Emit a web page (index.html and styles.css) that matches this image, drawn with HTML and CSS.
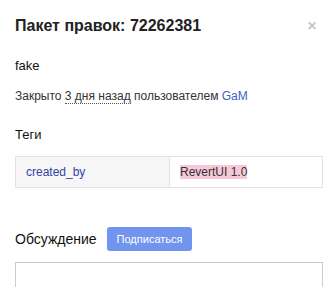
FILE: index.html
```html
<!DOCTYPE html>
<html>
  <head>
    <title>Пакет правок</title>
    <link rel="stylesheet" href="styles.css">
  </head>
  <body>
    <div class="dialog">
      <div class="header">
        <h1 class="title">Пакет правок: 72262381</h1>
        <span class="close">&#x2715;</span>
      </div>

      <p class="comment">fake</p>
      <p class="meta">Закрыто <span class="date">3 дня назад</span> пользователем <a class="user" href="#">GaM</a></p>

      <h2 class="section">Теги</h2>
      <table class="tags">
        <tr>
          <td class="tag-key">created_by</td>
          <td class="tag-value"><span class="mark">RevertUI 1.0</span></td>
        </tr>
      </table>

      <div class="discussion">
        <h2 class="section">Обсуждение</h2>
        <button class="subscribe">Подписаться</button>
      </div>
      <div class="reply"></div>
    </div>
  </body>
</html>
```

FILE: styles.css
```css
body {
  margin: 0;
  background: #fff;
  font-family: "Liberation Sans", Arial, sans-serif;
  color: #333;
}

.dialog {
  padding: 0 13px 0 15px;
}

.header {
  display: flex;
  justify-content: space-between;
  align-items: center;
  padding-top: 16px;
}

.title {
  margin: 0;
  font-size: 16px;
  line-height: 20px;
  font-weight: bold;
  color: #222;
}

.close {
  font-size: 12px;
  color: #c4c4c4;
  font-weight: bold;
  margin-right: 6px;
}

.comment {
  margin: 22px 0 0;
  font-size: 13px;
  line-height: 16px;
  color: #111;
}

.meta {
  margin: 14px 0 0;
  font-size: 12px;
  line-height: 16px;
  color: #333;
}

.date {
  border-bottom: 1px dotted #555;
}

.user {
  color: #3d5fc4;
  text-decoration: none;
}

.section {
  margin: 0;
  font-size: 13px;
  line-height: 16px;
  font-weight: normal;
  color: #111;
}

h2.section {
  margin-top: 23px;
}

.tags {
  width: 100%;
  margin-top: 13px;
  border-collapse: collapse;
  border: 1px solid #e2e2e2;
  font-size: 12px;
}

.tags td {
  height: 30px;
  padding: 0 10px;
}

.tag-key {
  width: 133px;
  background: #f6f6f6;
  color: #3443a8;
  border-right: 1px solid #e2e2e2;
}

.tag-value {
  color: #333;
}

.mark {
  background: #f7c8da;
}

.discussion {
  display: flex;
  align-items: center;
  gap: 10px;
  margin-top: 39px;
}

.discussion .section {
  margin: 0;
  font-size: 14px;
}

.subscribe {
  border: none;
  border-radius: 3px;
  background: #7194ee;
  color: #fff;
  font-family: "Liberation Sans", Arial, sans-serif;
  font-size: 11px;
  height: 24px;
  padding: 0 10px;
}

.reply {
  margin-top: 11px;
  height: 60px;
  border: 1px solid #ccc;
}
```
